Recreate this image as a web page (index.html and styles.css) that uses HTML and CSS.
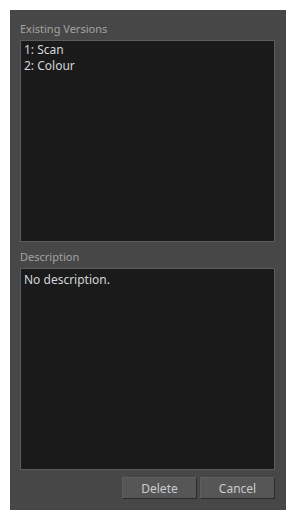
FILE: index.html
```html
<!DOCTYPE html>
<html lang="en">
<head>
    <meta charset="UTF-8">
    <title>Versions</title>
    <link rel="stylesheet" href="styles.css">
</head>
<body>
    <div class="dialog">
        <div class="section">
            <div class="label">Existing Versions</div>
            <div class="box list">
                <div class="item">1: Scan</div>
                <div class="item">2: Colour</div>
            </div>
        </div>

        <div class="section">
            <div class="label">Description</div>
            <div class="box desc">No description.</div>
        </div>

        <div class="buttons">
            <button class="btn">Delete</button>
            <button class="btn">Cancel</button>
        </div>
    </div>
</body>
</html>
```

FILE: styles.css
```css
body {
    margin: 0;
    background: #fff;
    font-family: "Noto Sans", "DejaVu Sans", sans-serif;
}

.dialog {
    margin: 10px;
    width: 276px;
    height: 500px;
    box-sizing: border-box;
    background: #474747;
    padding: 12px 11px 11px 10px;
    display: flex;
    flex-direction: column;
}

.section {
    display: flex;
    flex-direction: column;
}

.label {
    color: #a3a3a3;
    font-size: 11px;
    line-height: 14px;
    height: 18px;
}

.box {
    background: #1a1a1a;
    border: 1px solid #5c5c5c;
    height: 202px;
    box-sizing: border-box;
    padding: 1px 3px;
    color: #d2d6da;
    font-size: 12px;
}

.list {
    margin-bottom: 8px;
}

.item {
    line-height: 16px;
}

.desc {
    padding-top: 3px;
    line-height: 16px;
}

.buttons {
    display: flex;
    justify-content: flex-end;
    gap: 3px;
    margin-top: 7px;
}

.btn {
    width: 75px;
    height: 22px;
    background: #565656;
    color: #c9ccd0;
    font-family: inherit;
    font-size: 12px;
    border: 1px solid #5e5e5e;
    border-right-color: #2a2a2a;
    border-bottom-color: #2a2a2a;
    padding: 0;
}
```
